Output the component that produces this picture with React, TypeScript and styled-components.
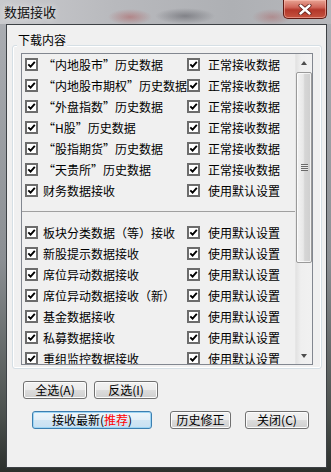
import styled, { createGlobalStyle } from 'styled-components'

const GlobalStyle = createGlobalStyle`
	html, body {
		margin: 0;
		padding: 0;
		background: #2f3331;
	}
	* {
		box-sizing: border-box;
	}
`

const FONT = `"Noto Sans CJK SC", "Liberation Sans", sans-serif`

type Item = { left: string; right: string }

const historyItems: Item[] = [
	{ left: '“内地股市”历史数据', right: '正常接收数据' },
	{ left: '“内地股市期权”历史数据', right: '正常接收数据' },
	{ left: '“外盘指数”历史数据', right: '正常接收数据' },
	{ left: '“H股”历史数据', right: '正常接收数据' },
	{ left: '“股指期货”历史数据', right: '正常接收数据' },
	{ left: '“天贵所”历史数据', right: '正常接收数据' },
	{ left: '财务数据接收', right: '使用默认设置' },
]

const otherItems: Item[] = [
	{ left: '板块分类数据（等）接收', right: '使用默认设置' },
	{ left: '新股提示数据接收', right: '使用默认设置' },
	{ left: '席位异动数据接收', right: '使用默认设置' },
	{ left: '席位异动数据接收（新）', right: '使用默认设置' },
	{ left: '基金数据接收', right: '使用默认设置' },
	{ left: '私募数据接收', right: '使用默认设置' },
	{ left: '重组监控数据接收', right: '使用默认设置' },
]

const CheckBox = () => (
	<Box>
		<svg width='9' height='9' viewBox='0 0 9 9'>
			<path d='M1.3 4.3 L3.6 6.6 L7.8 1.9' stroke='#000' strokeWidth='1.9' fill='none' />
		</svg>
	</Box>
)

const ListRow = ({ item }: { item: Item }) => (
	<Row>
		<Cell $gap={5} $pad={3}>
			<CheckBox />
			<Label>{item.left}</Label>
		</Cell>
		<Cell $gap={8} $pad={0}>
			<CheckBox />
			<Label>{item.right}</Label>
		</Cell>
	</Row>
)

export default function App() {
	return (
		<>
			<GlobalStyle />
			<Window>
				<TitleBar>
					<Title>数据接收</Title>
					<CloseButton>
						<svg width='14' height='11' viewBox='0 0 14 11'>
							<path d='M2.5 1.5 L11.5 9.5 M11.5 1.5 L2.5 9.5' stroke='#5a1a14' strokeWidth='4' strokeLinecap='round' />
							<path d='M2.5 1.5 L11.5 9.5 M11.5 1.5 L2.5 9.5' stroke='#fff' strokeWidth='2.4' strokeLinecap='round' />
						</svg>
					</CloseButton>
				</TitleBar>
				<Frame>
					<Client>
						<GroupBox>
							<Legend>下载内容</Legend>
							<ListBox>
								<Rows>
									{historyItems.map(item => (
										<ListRow key={item.left} item={item} />
									))}
									<Separator />
									{otherItems.map(item => (
										<ListRow key={item.left} item={item} />
									))}
								</Rows>
								<ScrollBar>
									<ArrowButton>
										<Arrow $up />
									</ArrowButton>
									<Thumb>
										<Gripper />
									</Thumb>
									<Track />
									<ArrowButton>
										<Arrow />
									</ArrowButton>
								</ScrollBar>
							</ListBox>
						</GroupBox>
						<ButtonRow $top={12} $left={16} $gap={7}>
							<Button $w={64}>全选(A)</Button>
							<Button $w={64}>反选(I)</Button>
						</ButtonRow>
						<ButtonRow $top={12} $left={25}>
							<Button $w={120} $default>
								接收最新(<Red>推荐</Red>)
							</Button>
							<Button $w={61} $ml={18}>
								历史修正
							</Button>
							<Button $w={64} $ml={14}>
								关闭(C)
							</Button>
						</ButtonRow>
					</Client>
				</Frame>
			</Window>
		</>
	)
}

const Window = styled.div`
	width: 331px;
	height: 472px;
	display: flex;
	flex-direction: column;
	background: linear-gradient(180deg, #b3b5ba 0, #a9acb1 30px, #8b8f93 55%, #4b504d 88%, #2c302d 100%);
	font-family: ${FONT};
	color: #000;
`

const TitleBar = styled.div`
	height: 24px;
	flex: none;
	display: flex;
	justify-content: space-between;
	align-items: flex-start;
	padding: 0 4px 0 4px;
	background:
		radial-gradient(ellipse 22px 8px at 130px 17px, rgba(170, 60, 60, 0.4), transparent),
		radial-gradient(ellipse 30px 8px at 185px 16px, rgba(70, 70, 78, 0.45), transparent),
		radial-gradient(ellipse 20px 8px at 272px 17px, rgba(170, 70, 70, 0.35), transparent),
		linear-gradient(90deg, #c9cacd 0, #b8b9bd 35%, #aeb0b4 70%, #b6b7bb 100%);
`

const Title = styled.div`
	padding-top: 3px;
	font-size: 13px;
	line-height: 18px;
	color: #111;
	text-shadow: 0 0 6px rgba(255, 255, 255, 0.9);
`

const CloseButton = styled.div`
	width: 44px;
	height: 19px;
	display: flex;
	align-items: center;
	justify-content: center;
	border: 1px solid #5e1a13;
	border-top: none;
	border-radius: 0 0 5px 5px;
	background: linear-gradient(180deg, #e8a493 0, #d0675a 40%, #b3372a 55%, #c5533f 100%);
	box-shadow: inset 0 0 0 1px rgba(255, 200, 190, 0.5);
`

const Frame = styled.div`
	flex: 1;
	display: flex;
	padding: 0 4px 4px 6px;
`

const Client = styled.div`
	flex: 1;
	background: #f0f0f0;
	border: 1px solid #3d4145;
	display: flex;
	flex-direction: column;
`

const GroupBox = styled.div`
	position: relative;
	margin: 20px 4px 0 5px;
	padding: 7px 8px 3px 8px;
	border: 1px solid #d5dfe5;
	border-radius: 3px;
	box-shadow: inset 0 0 0 1px #fff;
`

const Legend = styled.div`
	position: absolute;
	top: -15px;
	left: 4px;
	padding: 0 1px;
	background: #f0f0f0;
	font-size: 12px;
	line-height: 18px;
`

const ListBox = styled.div`
	height: 312px;
	display: flex;
	border: 1px solid #828790;
	background: #f0f0f0;
`

const Rows = styled.div`
	flex: 1;
	display: flex;
	flex-direction: column;
	overflow: hidden;
`

const Row = styled.div`
	display: grid;
	grid-template-columns: 165px 1fr;
	flex: none;
	height: 21px;
	align-items: center;
`

const Cell = styled.div<{ $gap: number; $pad: number }>`
	display: flex;
	align-items: center;
	height: 21px;
	gap: ${({ $gap }) => $gap}px;
	padding-left: ${({ $pad }) => $pad}px;
	overflow: hidden;
	white-space: nowrap;
`

const Box = styled.span`
	flex: none;
	width: 13px;
	height: 13px;
	display: flex;
	align-items: center;
	justify-content: center;
	border: 2px solid #6c6c6c;
	background: #fff;
`

const Label = styled.span`
	font-size: 12px;
	line-height: 18px;
`

const Separator = styled.div`
	flex: none;
	height: 21px;
	display: flex;
	align-items: center;

	&::after {
		content: '';
		flex: 1;
		height: 1px;
		background: #a0a0a0;
	}
`

const ScrollBar = styled.div`
	width: 17px;
	flex: none;
	display: flex;
	flex-direction: column;
	background: linear-gradient(90deg, #e2e2e2 0, #efefef 30%, #f1f1f1 100%);
	border-left: 1px solid #e6e6e6;
`

const ArrowButton = styled.div`
	height: 17px;
	flex: none;
	display: flex;
	align-items: center;
	justify-content: center;
`

const Arrow = styled.span<{ $up?: boolean }>`
	width: 0;
	height: 0;
	border-left: 3.5px solid transparent;
	border-right: 3.5px solid transparent;
	${({ $up }) => ($up ? 'border-bottom: 4px solid #4d4d4d;' : 'border-top: 4px solid #4d4d4d;')}
`

const Thumb = styled.div`
	margin: 1px 0 0 0;
	height: 191px;
	flex: none;
	display: flex;
	align-items: center;
	justify-content: center;
	border: 1px solid #9a9a9a;
	border-radius: 2px;
	background: linear-gradient(90deg, #f3f3f3 0, #e8e8e8 45%, #d6d6d6 55%, #cfcfcf 100%);
	box-shadow: inset 0 0 0 1px rgba(255, 255, 255, 0.7);
`

const Gripper = styled.span`
	width: 7px;
	height: 7px;
	background: repeating-linear-gradient(180deg, #6a6a6a 0, #6a6a6a 1px, #e9e9e9 1px, #e9e9e9 2px);
`

const Track = styled.div`
	flex: 1;
`

const ButtonRow = styled.div<{ $top: number; $left: number; $gap?: number }>`
	display: flex;
	margin-top: ${({ $top }) => $top}px;
	padding-left: ${({ $left }) => $left}px;
	gap: ${({ $gap }) => $gap ?? 0}px;
`

const Button = styled.button<{ $w: number; $default?: boolean; $ml?: number }>`
	width: ${({ $w }) => $w}px;
	height: 18px;
	margin-left: ${({ $ml }) => $ml ?? 0}px;
	padding: 0;
	display: flex;
	align-items: center;
	justify-content: center;
	font-family: ${FONT};
	font-size: 12px;
	line-height: 16px;
	color: #000;
	border: 1px solid ${({ $default }) => ($default ? '#3c7fb1' : '#707070')};
	border-radius: 3px;
	background: ${({ $default }) =>
		$default
			? 'linear-gradient(180deg, #eef6fb 0, #e3eff8 50%, #d2e6f4 50%, #c8e0f2 100%)'
			: 'linear-gradient(180deg, #f2f2f2 0, #ebebeb 50%, #dddddd 50%, #cfcfcf 100%)'};
	box-shadow: inset 0 0 0 1px ${({ $default }) => ($default ? '#9ed5f4' : '#fcfcfc')};
`

const Red = styled.span`
	color: #ff0000;
`
